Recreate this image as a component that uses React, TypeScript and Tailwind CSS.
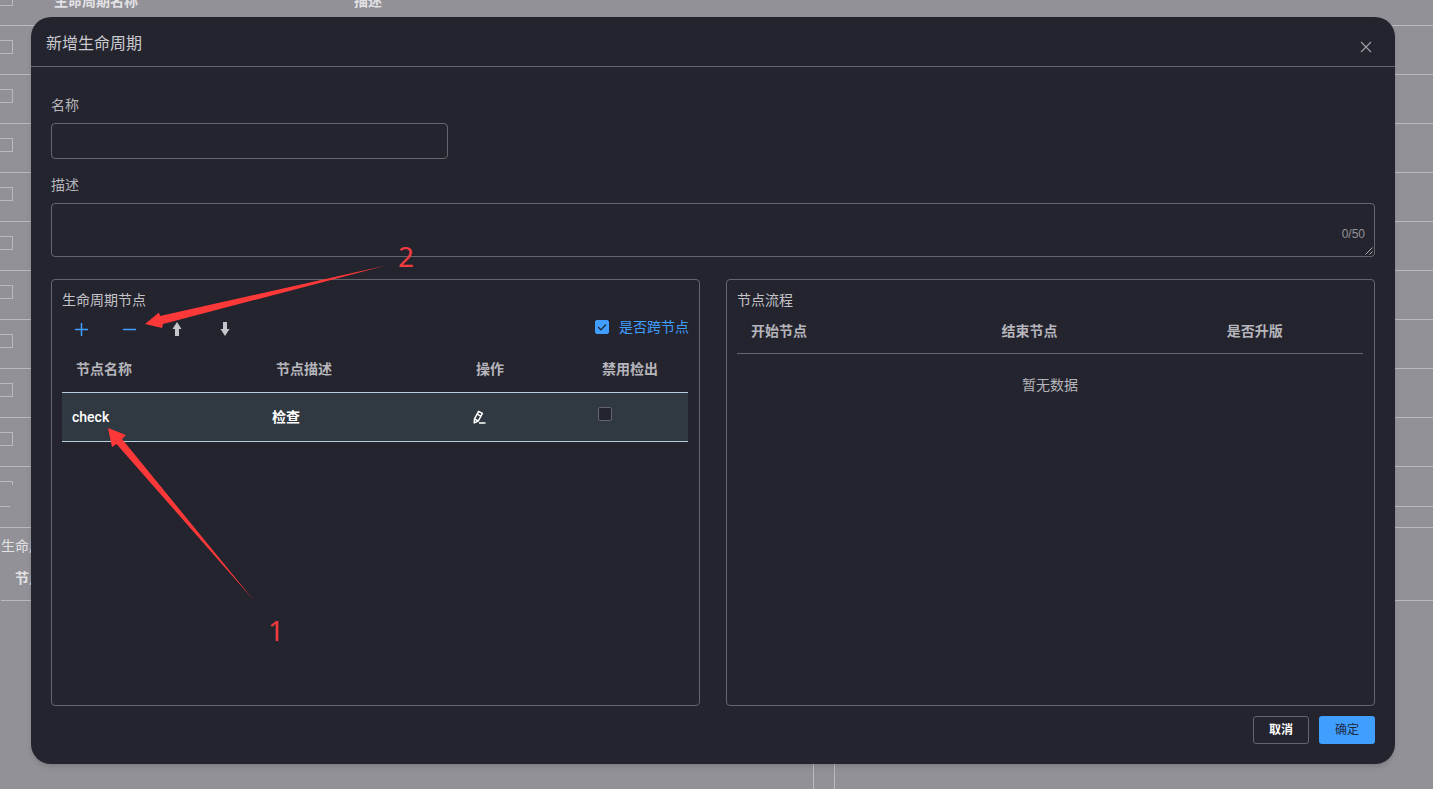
import { useState } from "react";

const backgroundRows = [1, 2, 3, 4, 5, 6, 7, 8, 9];

function TickBox({ label, checked, onChange, hiddenLabel = false }: {
  label: string;
  checked: boolean;
  onChange: (value: boolean) => void;
  hiddenLabel?: boolean;
}) {
  return (
    <label className="flex items-center gap-2.5 text-[#409eff]">
      <span className="grid">
        <input
          type="checkbox"
          aria-label={label}
          checked={checked}
          onChange={(e) => onChange(e.target.checked)}
          className="col-start-1 row-start-1 size-3.5 appearance-none rounded-xs border border-[#65666d] bg-[#24242e] checked:border-[#409eff] checked:bg-[#409eff]"
        />
        {checked && (
          <svg viewBox="0 0 14 14" className="pointer-events-none col-start-1 row-start-1 size-3.5" fill="none" stroke="#1f2430" strokeWidth="1.2">
            <path d="M3 7 6 9.800 11 4.500" />
          </svg>
        )}
      </span>
      {!hiddenLabel && <span>{label}</span>}
    </label>
  );
}

function BackgroundPage() {
  return (
    <div aria-hidden="true" className="flex h-full flex-col overflow-hidden text-[#e2e2e5]">
      <div className="flex h-[26px] shrink-0 border-b border-[#b9b9be] font-bold">
        <span className="-mt-2 h-3.5 w-[13px] border-r border-b border-[#b9b9be]" />
        <span className="-mt-[9px] ml-[41px] w-[300px]">生命周期名称</span>
        <span className="-mt-[9px]">描述</span>
      </div>
      {backgroundRows.map((row) => (
        <div key={row} className="flex h-[49px] shrink-0 border-b border-[#b9b9be] pt-3.5">
          <span className="h-3.5 w-[13px] border-y border-r border-[#b9b9be]" />
        </div>
      ))}
      <div className="flex h-10 shrink-0 justify-between">
        <div className="w-2.5 border-b border-[#b9b9be] pt-3.5">
          <span className="block h-1 w-[13px] border-t border-r border-[#b9b9be]" />
        </div>
        <div className="w-1/2 border-b border-[#b9b9be]" />
      </div>
      <div className="mt-5 flex grow gap-5">
        <section className="w-[814px] border-t border-r border-[#b9b9be] pt-2 pl-px">
          <h2>生命周期节点</h2>
          <div className="mt-3 h-[33px] border-b border-[#b9b9be] pl-3.5 font-bold">节点名称</div>
        </section>
        <section className="grow border-t border-l border-[#b9b9be] pt-10">
          <div className="h-[33px] border-b border-[#b9b9be]" />
        </section>
      </div>
    </div>
  );
}

function Arrow({ down = false }: { down?: boolean }) {
  return (
    <svg viewBox="0 0 10 14" className={down ? "h-3.5 w-2.5 rotate-180" : "h-3.5 w-2.5"} fill="#c6c6cd">
      <path d="M5 0 9.500 7H7V14H3V7H.5Z" />
    </svg>
  );
}

export default function App() {
  const [name, setName] = useState("");
  const [description, setDescription] = useState("");
  const [crossNode, setCrossNode] = useState(true);
  const [noCheckout, setNoCheckout] = useState(false);

  return (
    <div className="relative h-screen overflow-hidden bg-[#929197] font-['Liberation_Sans','Noto_Sans_CJK_SC',sans-serif] text-sm leading-5">
      <BackgroundPage />
      <div className="absolute inset-0 flex items-start pt-[17px] pr-[38px] pl-[31px]">
        <div role="dialog" aria-labelledby="dialog-title" className="flex grow flex-col rounded-[20px] bg-[#24242e] pb-5 text-[#b5b5bb] shadow-md">
          <header className="flex h-[50px] items-center justify-between border-b border-[#65666d] pr-[23px] pl-[15px]">
            <h1 id="dialog-title" className="pt-1 text-base leading-6 text-[#c9c9ce]">新增生命周期</h1>
            <button type="button" aria-label="关闭" className="mt-2.5">
              <svg viewBox="0 0 12 12" className="size-3" stroke="#a2a2a9" strokeWidth="1.1">
                <path d="M1 1 11 11M11 1 1 11" />
              </svg>
            </button>
          </header>

          <form className="flex flex-col px-5 pt-7" onSubmit={(e) => e.preventDefault()}>
            <label htmlFor="name">名称</label>
            <input
              id="name"
              value={name}
              onChange={(e) => setName(e.target.value)}
              className="mt-2 h-9 w-[397px] rounded border border-[#65666d] bg-transparent px-3 outline-none"
            />
            <label htmlFor="description" className="mt-4">描述</label>
            <div className="mt-2 grid">
              <textarea
                id="description"
                maxLength={50}
                value={description}
                onChange={(e) => setDescription(e.target.value)}
                className="col-start-1 row-start-1 h-[54px] resize-none rounded border border-[#65666d] bg-transparent px-3 py-1 outline-none"
              />
              <span className="pointer-events-none col-start-1 row-start-1 mr-2.5 mb-3.5 self-end justify-self-end text-xs leading-4.5 text-[#93939a]">
                {description.length}/50
              </span>
              <svg viewBox="0 0 8 8" className="pointer-events-none col-start-1 row-start-1 mr-0.5 mb-0.5 size-2 self-end justify-self-end" stroke="#d4d4d8" strokeWidth="0.8">
                <path d="M.5 7.500 7.500.5M4.500 7.500 7.500 4.500" />
              </svg>
            </div>

            <div className="mt-[22px] grid grid-cols-2 gap-[26px]">
              <section className="h-[427px] rounded border border-[#65666d] pt-2.5 pr-[11px] pl-2.5">
                <h2 className="text-[#c3c3c8]">生命周期节点</h2>
                <div className="-mr-px flex items-start justify-between">
                  <div className="flex h-9 items-center gap-2.5 pt-0.5">
                    <button type="button" aria-label="添加" className="grid w-[38px] place-items-center">
                      <svg viewBox="0 0 14 14" className="size-3.5" stroke="#409eff" strokeWidth="1.5"><path d="M1 7.500H14M7.500 1V14" /></svg>
                    </button>
                    <button type="button" aria-label="删除" className="grid w-[38px] place-items-center">
                      <svg viewBox="0 0 14 14" className="size-3.5" stroke="#409eff" strokeWidth="1.5"><path d="M1 7.500H14" /></svg>
                    </button>
                    <button type="button" aria-label="上移" className="grid w-[38px] place-items-center"><Arrow /></button>
                    <button type="button" aria-label="下移" className="grid w-[38px] place-items-center"><Arrow down /></button>
                  </div>
                  <div className="pt-[7px]">
                    <TickBox label="是否跨节点" checked={crossNode} onChange={setCrossNode} />
                  </div>
                </div>
                <table className="w-full table-fixed border-collapse text-left">
                  <colgroup>
                    <col className="w-[200px]" />
                    <col className="w-[200px]" />
                    <col className="w-[126px]" />
                    <col />
                  </colgroup>
                  <thead>
                    <tr className="h-[46px]">
                      <th className="pl-3.5">节点名称</th>
                      <th className="pl-3.5">节点描述</th>
                      <th className="pl-3.5">操作</th>
                      <th className="pl-3.5">禁用检出</th>
                    </tr>
                  </thead>
                  <tbody>
                    <tr className="h-[49px] border-y border-[#b5cfe0] bg-[#303841] text-white">
                      <td className="pl-2.5 font-['Roboto'] font-medium">check</td>
                      <td className="pl-2.5 font-bold">检查</td>
                      <td className="pl-2.5">
                        <button type="button" aria-label="编辑" className="block">
                          <svg viewBox="0 0 14 14" className="size-3.5" fill="none" stroke="#fff" strokeWidth="1.5" strokeLinejoin="round">
                            <path d="M6.600 1.300 10.400 3.300 6.300 11 2.200 12.900 2.500 8.800Z" />
                            <path d="M5.200 4.200 8.800 6.200M2.500 8.800 6.300 11M7 13H13.500" />
                          </svg>
                        </button>
                      </td>
                      <td className="pb-1.5 pl-2.5"><TickBox label="禁用检出" hiddenLabel checked={noCheckout} onChange={setNoCheckout} /></td>
                    </tr>
                  </tbody>
                </table>
              </section>

              <section className="h-[427px] rounded border border-[#65666d] pt-2.5 pr-[11px] pl-2.5">
                <h2 className="text-[#c3c3c8]">节点流程</h2>
                <table className="w-full table-fixed border-collapse text-left">
                  <colgroup>
                    <col className="w-2/5" />
                    <col className="w-9/25" />
                    <col />
                  </colgroup>
                  <thead>
                    <tr className="h-[43px] border-b border-[#65666d]">
                      <th className="pl-3.5">开始节点</th>
                      <th className="pl-3.5">结束节点</th>
                      <th className="pl-3.5">是否升版</th>
                    </tr>
                  </thead>
                  <tbody>
                    <tr className="h-[63px]">
                      <td colSpan={3} className="text-center">暂无数据</td>
                    </tr>
                  </tbody>
                </table>
              </section>
            </div>

            <footer className="mt-2.5 flex justify-end gap-2.5 text-xs">
              <button type="button" className="h-7 w-14 rounded-[3px] border border-[#65666d] font-bold text-white">取消</button>
              <button type="submit" className="h-7 w-14 rounded-[3px] bg-[#409eff] text-[#1d2a44]">确定</button>
            </footer>
          </form>
        </div>
      </div>

      <svg viewBox="0 0 400 400" className="pointer-events-none absolute top-[240px] left-[50px] size-[400px]" fill="#fd3838">
        <path d="M95 84 109 72.500 110 76 336 25.500 113 84 112 88Z" />
        <path d="M58 188 76 195 72 199 203.500 360 66.500 204 62 207Z" />
      </svg>
      <span className="absolute top-[236px] left-[398px] font-['Noto_Sans'] text-[28px] leading-10 text-[#f33c40]">2</span>
      <span className="absolute top-[610px] left-[268px] font-['Noto_Sans'] text-[28px] leading-10 text-[#f33c40]">1</span>
    </div>
  );
}
